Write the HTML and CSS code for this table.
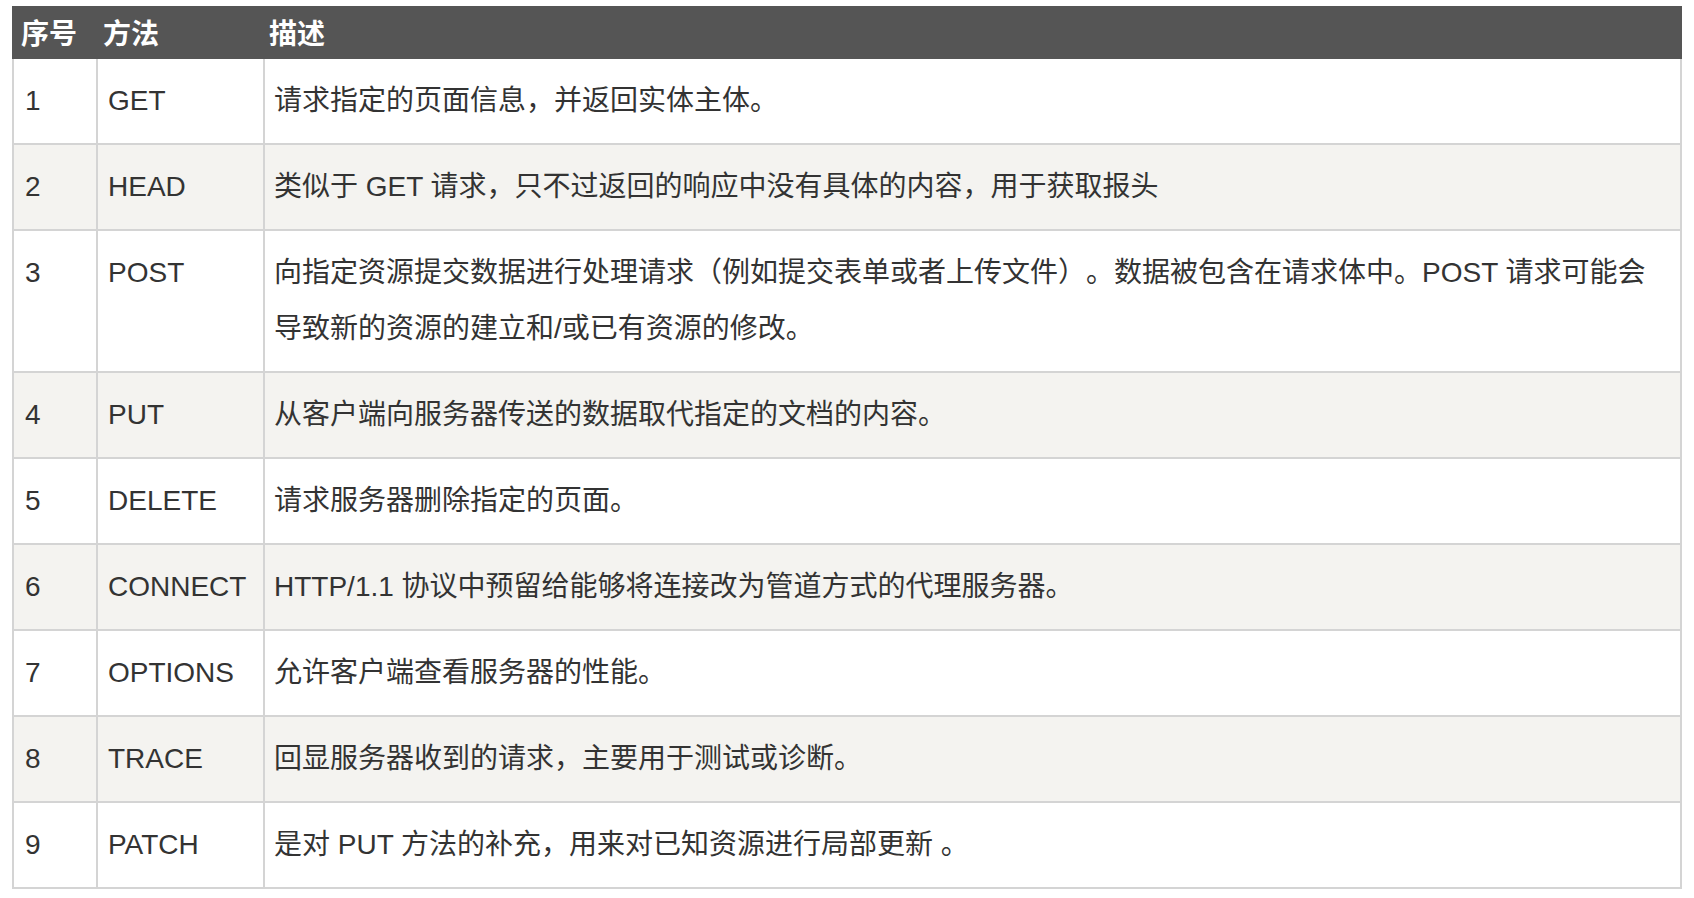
FILE: index.html
```html
<!DOCTYPE html>
<html lang="zh-CN">
<head>
<meta charset="utf-8">
<title>HTTP 请求方法</title>
<link rel="stylesheet" href="styles.css">
</head>
<body>
<table class="methods">
  <thead>
    <tr>
      <th class="c-num">序号</th>
      <th class="c-method">方法</th>
      <th class="c-desc">描述</th>
    </tr>
  </thead>
  <tbody>
    <tr><td>1</td><td>GET</td><td>请求指定的页面信息，并返回实体主体。</td></tr>
    <tr><td>2</td><td>HEAD</td><td>类似于 GET 请求，只不过返回的响应中没有具体的内容，用于获取报头</td></tr>
    <tr><td>3</td><td>POST</td><td>向指定资源提交数据进行处理请求（例如提交表单或者上传文件）。数据被包含在请求体中。POST 请求可能会导致新的资源的建立和/或已有资源的修改。</td></tr>
    <tr><td>4</td><td>PUT</td><td>从客户端向服务器传送的数据取代指定的文档的内容。</td></tr>
    <tr><td>5</td><td>DELETE</td><td>请求服务器删除指定的页面。</td></tr>
    <tr><td>6</td><td>CONNECT</td><td>HTTP/1.1 协议中预留给能够将连接改为管道方式的代理服务器。</td></tr>
    <tr><td>7</td><td>OPTIONS</td><td>允许客户端查看服务器的性能。</td></tr>
    <tr><td>8</td><td>TRACE</td><td>回显服务器收到的请求，主要用于测试或诊断。</td></tr>
    <tr><td>9</td><td>PATCH</td><td>是对 PUT 方法的补充，用来对已知资源进行局部更新 。</td></tr>
  </tbody>
</table>
</body>
</html>
```
FILE: styles.css
```css
html, body {
  margin: 0;
  padding: 0;
  background: #ffffff;
}

body {
  font-family: "Liberation Sans", "Noto Sans CJK SC", sans-serif;
  color: #333333;
}

.methods {
  border-collapse: separate;
  border-spacing: 0;
  table-layout: fixed;
  width: 1670px;
  margin: 6px 0 0 12px;
  font-size: 28px;
}

.methods th,
.methods td {
  box-sizing: border-box;
  text-align: left;
}

.methods th {
  background: #555555;
  color: #ffffff;
  font-weight: bold;
  font-family: "Noto Sans CJK SC", sans-serif;
  height: 53px;
  line-height: 53px;
  padding: 0;
  vertical-align: middle;
}

.methods th.c-num {
  width: 86px;
  padding-left: 9px;
}

.methods th.c-method {
  width: 167px;
  padding-left: 5px;
}

.methods th.c-desc {
  width: 1417px;
  padding-left: 4px;
}

.methods td {
  border-right: 2px solid #d4d4d4;
  border-bottom: 2px solid #d4d4d4;
  padding: 14px 8px 14px 10px;
  line-height: 56px;
  vertical-align: top;
  text-spacing-trim: space-all;
}

.methods td:first-child {
  border-left: 2px solid #d4d4d4;
  padding-left: 11px;
}

.methods td:last-child {
  padding-left: 9px;
}

.methods tbody tr:nth-child(even) td {
  background: #f4f3f0;
}
```
